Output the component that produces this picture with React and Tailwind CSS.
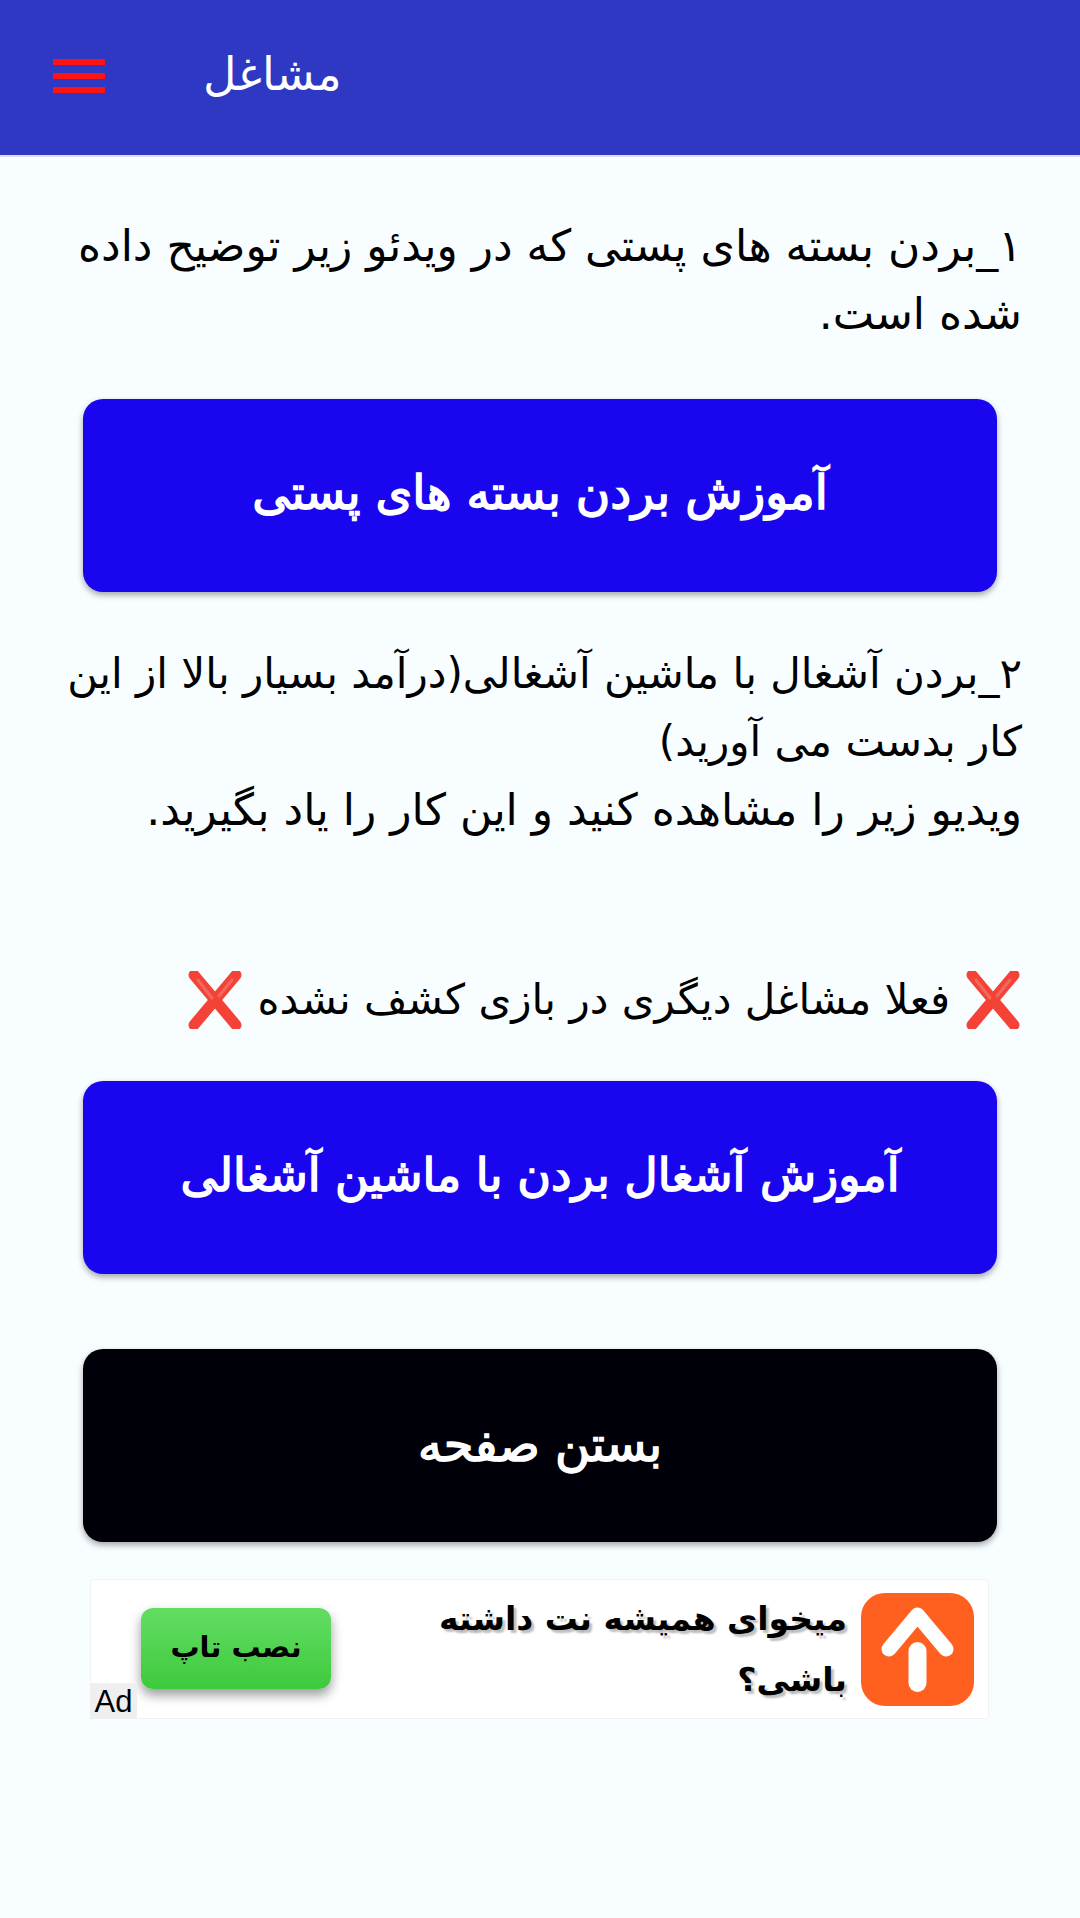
import React from 'react';

const CrossMark = () => (
  <svg viewBox="0 0 58 58" className="inline-block w-[58px] h-[58px] align-middle">
    <path d="M8 4 L50 54 M50 4 L8 54" stroke="#f44336" strokeWidth="11" strokeLinecap="round" fill="none" />
    <path d="M12 9 L26 27 M46 9 L33 25" stroke="#ef6a5e" strokeWidth="3" strokeLinecap="round" fill="none" />
  </svg>
);

const ActionButton = ({ label, color }) => (
  <button className={`w-[914px] h-[193px] pb-[4px] mx-auto block rounded-[20px] text-white [-webkit-text-stroke:1.5px_white] shadow-[0_3px_6px_rgba(0,0,0,0.35)] ${color}`}>
    {label}
  </button>
);

const App = () => {
  return (
    <div dir="rtl" className="w-[1080px] h-[1918px] bg-[#f8fdff] font-['DejaVu_Sans',sans-serif]">
      {/* Header */}
      <div dir="ltr" className="h-[157px] bg-[#2e38c3] border-b-2 border-[#d9def5] flex items-center pl-[53px] pb-[3px]">
        <div className="flex flex-col gap-[8px] w-[52px]">
          <span className="h-[6px] bg-[#ff1212]" />
          <span className="h-[6px] bg-[#ff1212]" />
          <span className="h-[6px] bg-[#ff1212]" />
        </div>
        <span className="ml-[98px] mb-[5px] text-white text-[46px] leading-none">مشاغل</span>
      </div>

      <div className="px-[58px] pt-[55px] text-[44px] leading-[68px] text-black">
        <p>۱_بردن بسته های پستی که در ویدئو زیر توضیح داده شده است.</p>
      </div>

      <div className="mt-[51px]">
        <ActionButton label="آموزش بردن بسته های پستی" color="bg-[#1a06ee] text-[47px]" />
      </div>

      <div className="px-[58px] mt-[48px] text-[42px] leading-[68px] text-black">
        <p>۲_بردن آشغال با ماشین آشغالی(درآمد بسیار بالا از این کار بدست می آورید)</p>
        <p className="text-[44px]">ویدیو زیر را مشاهده کنید و این کار را یاد بگیرید.</p>
        <p className="mt-[122px] flex items-center gap-[14px]">
          <CrossMark />
          <span>فعلا مشاغل دیگری در بازی کشف نشده</span>
          <CrossMark />
        </p>
      </div>

      <div className="mt-[47px]">
        <ActionButton label="آموزش آشغال بردن با ماشین آشغالی" color="bg-[#1a06ee] text-[46px]" />
      </div>
      <div className="mt-[75px]">
        <ActionButton label="بستن صفحه" color="bg-[#000008] text-[48px]" />
      </div>

      {/* Ad banner */}
      <div dir="ltr" className="relative w-[899px] h-[140px] mr-[91px] mt-[37px] bg-white border border-[#f0f3f5] rounded-[3px] flex items-center">
        <button className="ml-[50px] mb-[2px] w-[190px] h-[81px] rounded-[12px] bg-gradient-to-b from-[#62dd62] to-[#3dca3c] text-black text-[29px] font-bold shadow-[0_6px_12px_rgba(0,0,0,0.4)]">
          نصب تاپ
        </button>
        <p dir="rtl" className="ml-auto w-[460px] text-[33px] leading-[61px] font-bold text-black [text-shadow:3px_3px_2px_rgba(0,0,0,0.25)]">
          میخوای همیشه نت داشته باشی؟
        </p>
        <div className="ml-[14px] mr-[14px] mt-[1px] w-[113px] h-[113px] rounded-[24px] bg-[#ff6020]">
          <svg viewBox="0 0 113 113" className="w-[113px] h-[113px]">
            <path d="M28 56 L56.500 22 L85 56" stroke="#fff" strokeWidth="15" strokeLinecap="round" strokeLinejoin="round" fill="none" />
            <path d="M56.500 90 V58" stroke="#ff6020" strokeWidth="28" strokeLinecap="round" fill="none" />
            <path d="M56.500 90 V58" stroke="#fff" strokeWidth="18" strokeLinecap="round" fill="none" />
          </svg>
        </div>
        <span className="absolute left-[-1px] bottom-[-1px] h-[36px] w-[47px] bg-[#efefef] text-[31px] leading-[38px] text-black font-['Liberation_Sans',sans-serif] text-center">Ad</span>
      </div>
    </div>
  );
};

export default App;
